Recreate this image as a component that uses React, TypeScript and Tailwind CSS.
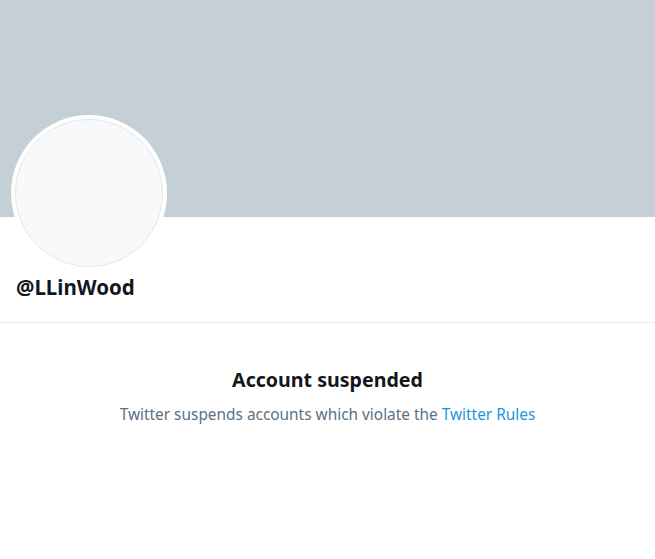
export default function App() {
  return (
    <div
      className="min-h-screen w-full bg-white"
      style={{ fontFamily: '"Noto Sans", "Liberation Sans", sans-serif' }}
    >
      <div className="h-[217px] bg-[#c4cfd6]" />
      <div className="px-[11px] -mt-[102px]">
        <div className="w-[156px] h-[156px] rounded-full bg-white p-[4px]">
          <div className="w-full h-full rounded-full bg-[#f7f9fa] border border-[#e1e8ed]" />
        </div>
      </div>
      <div className="px-4 pt-[4px] pb-[23px]">
        <p className="text-[20.5px] font-bold leading-[24px] text-[#14171a]">@LLinWood</p>
      </div>
      <div className="border-t border-[#e6ecf0]" />
      <div className="flex flex-col items-center pt-[44px]">
        <h2 className="text-[19.6px] font-bold leading-[25px] text-[#14171a]">Account suspended</h2>
        <p className="mt-[13px] text-[15.4px] leading-[20px] text-[#5b7083]">
          Twitter suspends accounts which violate the{' '}
          <span className="text-[#1b95e0]">Twitter Rules</span>
        </p>
      </div>
    </div>
  )
}
